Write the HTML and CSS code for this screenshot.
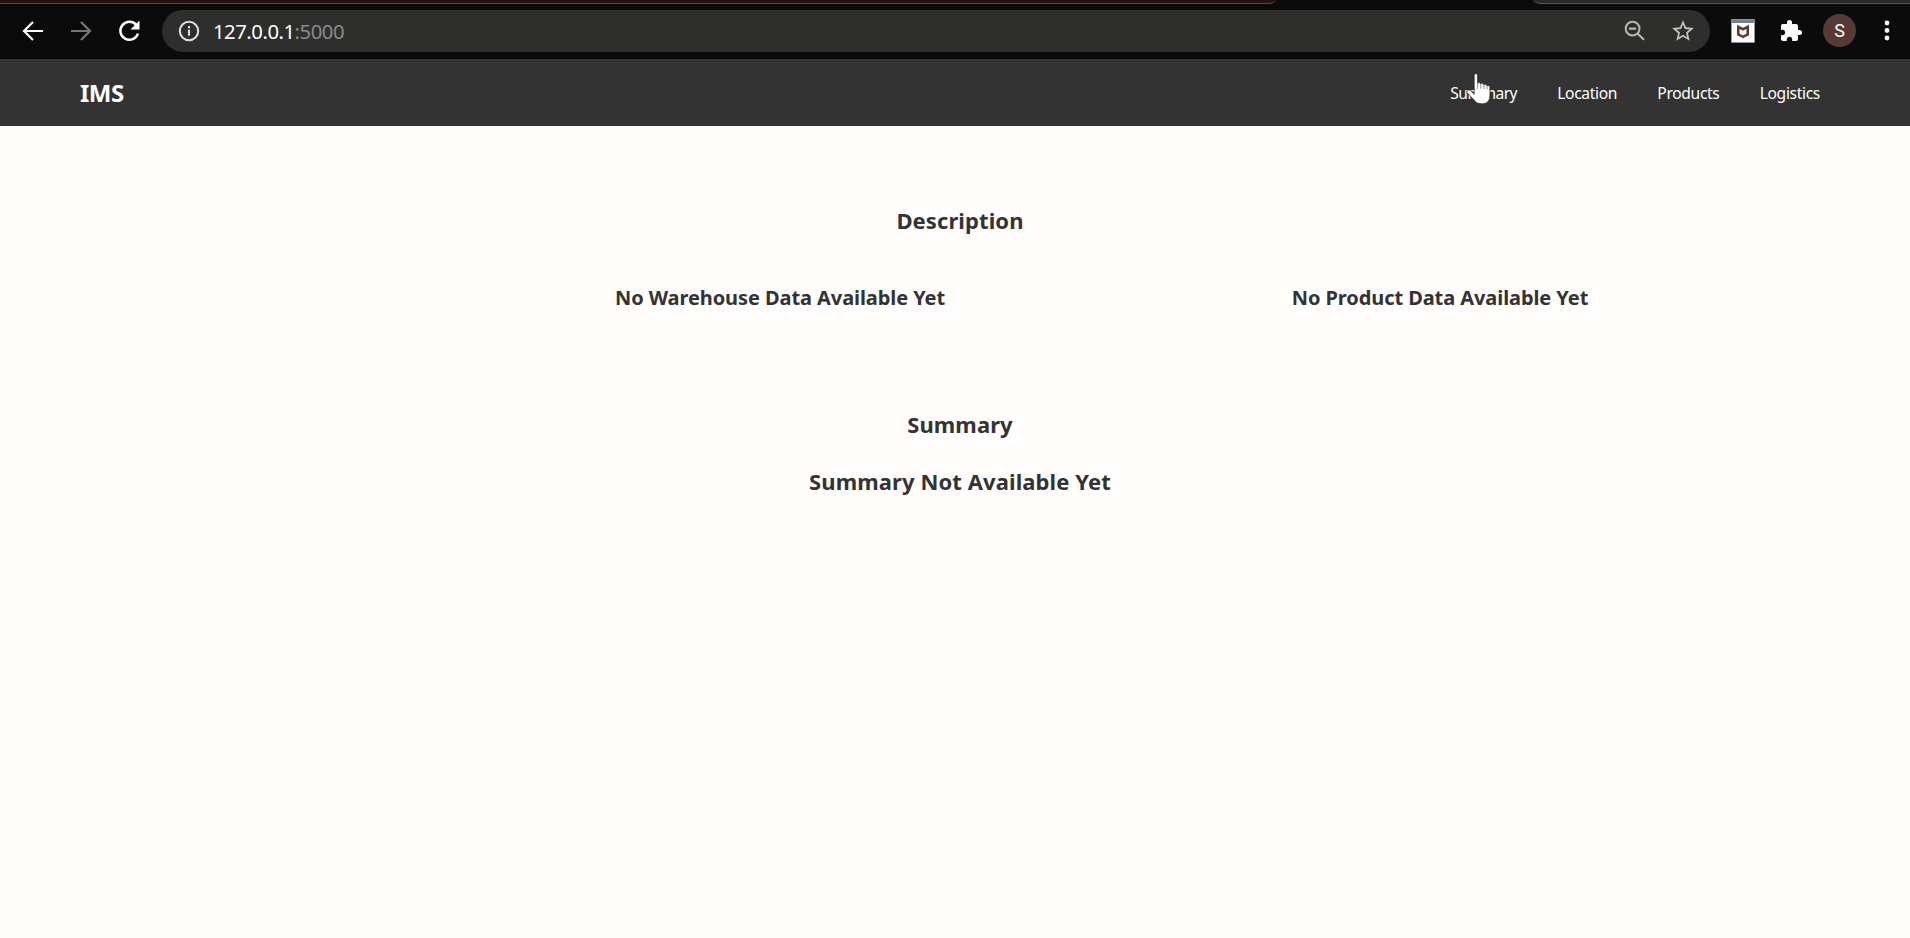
FILE: index.html
```html
<!DOCTYPE html>
<html lang="en">
<head>
<meta charset="utf-8">
<title>IMS</title>
<link rel="stylesheet" href="styles.css">
</head>
<body>
<div class="tabs"><div class="tab tab-left"></div><div class="tab tab-right"></div></div>
<div class="toolbar">
  <svg class="nav-icon" viewBox="0 0 24 24"><path d="M22 12H3M12 3l-9 9 9 9"/></svg>
  <svg class="nav-icon dim" viewBox="0 0 24 24"><path d="M2 12h19M12 3l9 9-9 9"/></svg>
  <svg class="nav-icon reload" viewBox="0 0 24 24"><path d="M19.6 6.4A9 9 0 1 0 21 14.5"/><path class="solid" d="M22.5 1.5v9h-9z"/></svg>
  <div class="omnibox">
    <svg class="info" viewBox="0 0 22 22"><circle cx="11" cy="11" r="9.2"/><path d="M11 9.7v6M11 6v2.2"/></svg>
    <div class="url"><span class="host">127.0.0.1</span><span class="port">:5000</span></div>
    <svg class="lens" viewBox="0 0 22 22"><circle cx="8.6" cy="8.6" r="6.9"/><path d="M5 8.6h7.2M13.5 13.5l6.5 6.3"/></svg>
    <svg class="star" viewBox="0 0 24 24"><path d="M22 9.24l-7.19-.62L12 2 9.19 8.63 2 9.24l5.46 4.73L5.82 21 12 17.27 18.18 21l-1.63-7.03L22 9.24zM12 15.4l-3.76 2.27 1-4.28-3.32-2.88 4.38-.38L12 6.1l1.71 4.04 4.38.38-3.32 2.88 1 4.28L12 15.4z"/></svg>
  </div>
  <svg class="shield" viewBox="0 0 24 24"><rect width="24" height="24" rx="1" fill="#8b969c"/><path d="M1 4h22v19H1z" fill="#fffefd"/><path d="M1 1h22v3H1z" fill="#728089"/><path d="M7.3 7.8l4.7 2.4 4.7-2.4v7.6L12 17.8l-4.7-2.4z" fill="none" stroke="#613b38" stroke-width="2.6"/></svg>
  <svg class="puzzle" viewBox="0 0 24 24"><path d="M20.5 11H19V7c0-1.1-.9-2-2-2h-4V3.5a2.5 2.5 0 0 0-5 0V5H4c-1.1 0-1.99.9-1.99 2v3.8H3.5c1.49 0 2.7 1.21 2.7 2.7s-1.21 2.7-2.7 2.7H2V20c0 1.1.9 2 2 2h3.8v-1.5c0-1.49 1.21-2.7 2.7-2.7s2.7 1.21 2.7 2.7V22H17c1.1 0 2-.9 2-2v-4h1.5a2.5 2.5 0 0 0 0-5z"/></svg>
  <div class="avatar">S</div>
  <svg class="dots" viewBox="0 0 6 22"><circle cx="3" cy="3" r="2.4"/><circle cx="3" cy="10.5" r="2.4"/><circle cx="3" cy="18" r="2.4"/></svg>
</div>
<nav class="navbar">
  <div class="brand">IMS</div>
  <div class="links"><a class="l-sum">Summary</a><a>Location</a><a>Products</a><a>Logistics</a></div>
</nav>
<main class="content">
  <h2 class="heading">Description</h2>
  <div class="cards"><h3>No Warehouse Data Available Yet</h3><h3>No Product Data Available Yet</h3></div>
  <h2 class="heading">Summary</h2>
  <h2 class="heading h-none">Summary Not Available Yet</h2>
</main>
<svg class="pointer" viewBox="0 0 26 34"><path d="M8.2 2.3c0-2.2 3.3-2.2 3.4 0v8.2c.5-1.5 3-1.3 3.1.5.7-1.2 3-1 3.2.9.8-1 2.9-.7 3.1 1 .8-1 2.9-.5 2.9 1.3v7c0 7.1-2.7 9.6-8.2 9.6-4.2 0-6.3-1.5-8-4.3L1.3 20c-1.6-2.6 1.4-4.1 3.4-2.1l3.5 3.4z"/><path class="gap" d="M11.6 9.5v6.2M14.8 10.5v5.2M18 11.5v4.7M21.1 12.5v4"/></svg>
</body>
</html>
```
FILE: styles.css
```css
* { box-sizing: border-box; }
body { margin: 0; height: 938px; overflow: hidden; background: #fffefd; color: #333; font-family: "Noto Sans", "Open Sans", sans-serif; }
svg { display: block; flex: none; }

.tabs { height: 4px; background: #0b0b0b; display: flex; justify-content: space-between; }
.tab { height: 4px; }
.tab-left { width: 1276px; background: #25110f; border-bottom: 1px solid #5b4842; border-bottom-right-radius: 8px 4px; }
.tab-right { width: 377px; background: #292929; border-bottom: 1px solid #555; border-bottom-left-radius: 9px 4px; }

.toolbar { height: 55px; background: #0b0b0b; display: flex; align-items: center; padding: 0 19px 1px 21px; }
.nav-icon { width: 24px; height: 24px; margin: -1px 24px 0 0; fill: none; stroke: #fff; stroke-width: 2.2; }
.nav-icon.dim { stroke: #777; }
.nav-icon.reload { margin-right: 21px; stroke-width: 2.5; }
.nav-icon .solid { fill: #fff; stroke: none; }
.omnibox { width: 1548px; height: 42px; border-radius: 21px; background: #2e2e2c; display: flex; align-items: center; padding: 0 14px 0 16px; }
.info { width: 22px; height: 22px; fill: none; stroke: #ddd; stroke-width: 2.1; }
.url { margin-left: 13px; flex: 1; font-size: 20.3px; line-height: 42px; white-space: nowrap; letter-spacing: -.48px; }
.host { color: #fff; }
.port { color: #8b8b8b; }
.lens { width: 22px; height: 22px; margin-right: 24px; fill: none; stroke: #b5b5b3; stroke-width: 2.1; }
.star { width: 26px; height: 26px; fill: #c2c2c0; }
.shield { width: 24px; height: 24px; margin-left: 21px; }
.puzzle { width: 24px; height: 24px; margin-left: 24px; fill: #fff; }
.avatar { width: 33px; height: 33px; margin: -1px 0 0 20px; border-radius: 50%; background: #573a34; color: #fff; font: 18px/33px Roboto, sans-serif; text-align: center; }
.dots { width: 6px; height: 22px; margin-left: 28px; fill: #fff; }

.navbar { height: 67px; background: #333; color: #fff; display: flex; justify-content: space-between; padding: 0 90px 0 80px; }
.brand { font-size: 24px; font-weight: 700; line-height: 68px; letter-spacing: -.5px; }
.links { display: flex; gap: 40.2px; font-size: 15.6px; line-height: 69px; letter-spacing: -.33px; }
.l-sum { letter-spacing: -.55px; }

.content { padding: 72px 140px 0 150px; }
.content h2, .content h3 { margin: 0; text-align: center; font-weight: 700; white-space: nowrap; }
.content .heading { font-size: 22px; line-height: 44px; letter-spacing: .1px; }
.content .cards { display: grid; grid-template-columns: 660px 660px; margin: 34px 0 82px 300px; }
.content h3 { font-size: 20px; line-height: 44px; letter-spacing: -.08px; }
.content .h-none { margin-top: 13px; }

.pointer { position: absolute; left: 1466px; top: 73px; width: 26px; height: 34px; fill: #fff; stroke: #222; stroke-width: .7; }
.pointer .gap { fill: none; stroke: #777; stroke-width: .8; }
```
